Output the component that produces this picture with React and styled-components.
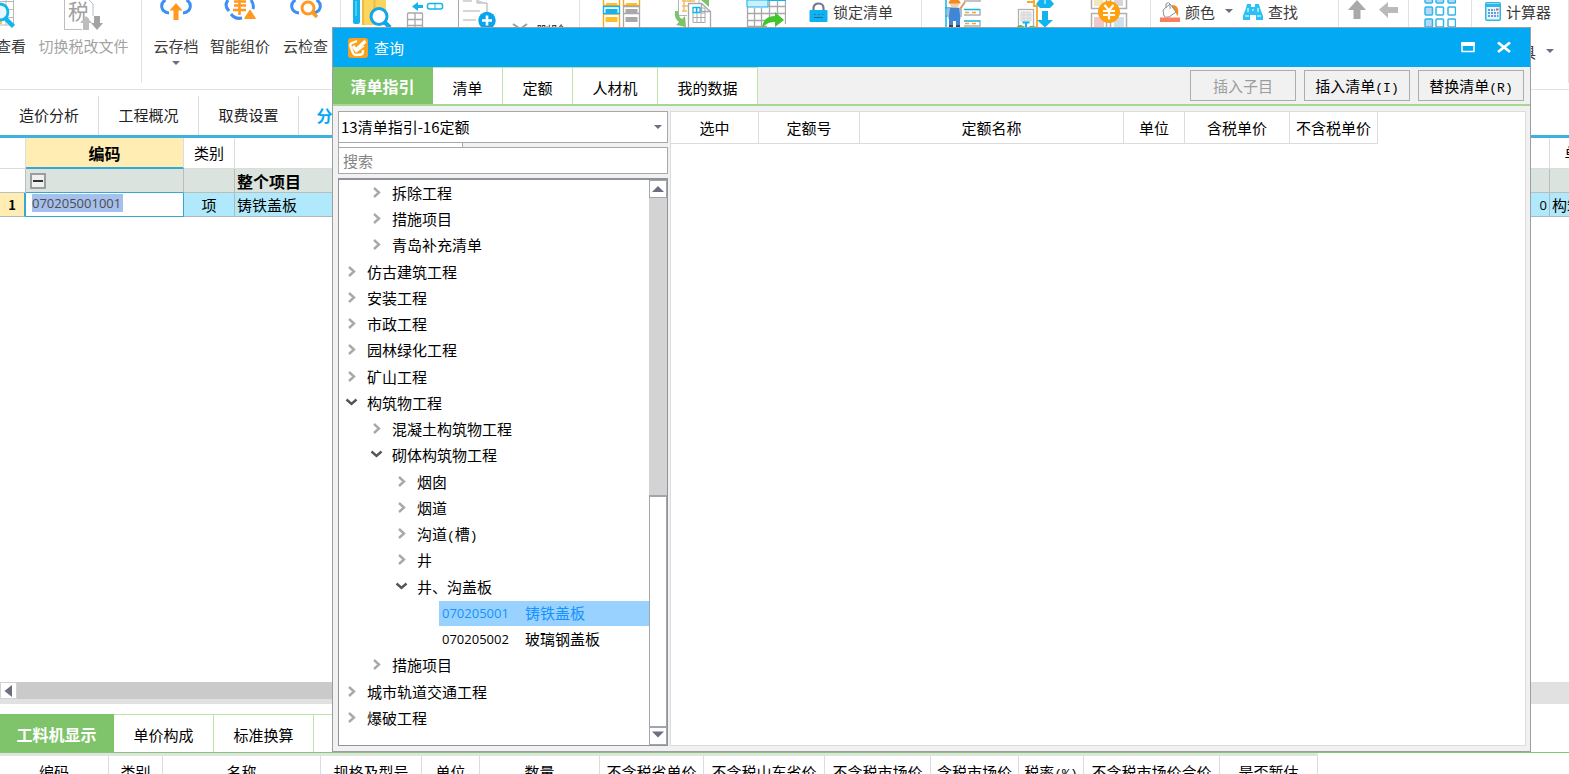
import React from 'react';
import styled, {createGlobalStyle, css} from 'styled-components';

const GlobalStyle = createGlobalStyle`
  * {
    box-sizing: border-box;
  }

  body {
    margin: 0;
    background: #fff;
  }

  body, button, input, select {
    font-family: "Noto Sans CJK SC", "Liberation Sans", sans-serif;
    font-size: 15px;
    line-height: 20px;
    color: #000;
  }

  button {
    padding: 0;
    border: 0;
    background: none;
    white-space: nowrap;
  }
`;

const Page = styled.div`
  position: relative;
  display: flex;
  flex-direction: column;
  height: 100vh;
  overflow: hidden;
`;

const Latin = styled.span`
  font-family: "Liberation Mono", monospace;
  font-size: 13px;
  line-height: 1;
`;

const Code = styled.span`
  font-family: "Open Sans", sans-serif;
  font-size: 13px;
`;

/* ribbon */

const Ribbon = styled.header`
  display: flex;
  flex: none;
  height: 90px;
  border-bottom: 1px solid #e2e2e2;
  overflow: hidden;
`;

const Group = styled.div`
  display: flex;
  flex: none;
  gap: ${props => props.$gap || 0}px;
  width: ${props => props.$width}px;
  height: 83px;
  padding-left: ${props => props.$pad || 0}px;
  border-right: ${props => (props.$open ? '0' : '1px solid #e2e2e2')};
`;

const BigButton = styled.button`
  display: flex;
  flex: none;
  flex-direction: column;
  align-items: center;
  width: ${props => props.$width || 40}px;
  color: ${props => (props.disabled ? '#a3a3a3' : '#3c3c3c')};

  & > svg {
    flex: none;
  }

  & > span {
    margin: 4px 0;
  }
`;

const Stack = styled.div`
  display: flex;
  flex-direction: column;
  padding-top: ${props => props.$top || 2}px;
`;

const StackRow = styled.div`
  display: flex;
  align-items: center;
  gap: 10px;
  height: 20px;
`;

const SmallButton = styled.button`
  display: flex;
  align-items: center;
  gap: 5px;
  height: 20px;
  color: #3c3c3c;
`;

const IndentedButton = styled(SmallButton)`
  margin-left: 21px;
`;

/* module tabs and bill grid */

const NavTabs = styled.nav`
  display: flex;
  flex: none;
  height: 48px;
  padding-top: 6px;
  border-bottom: 3px solid #3fb1de;
`;

const NavTab = styled.button`
  width: 100px;
  padding-bottom: 2px;
  border-right: 1px solid #dcdcdc;
  color: #222;

  &:first-child {
    width: 99px;
  }

  ${props => props.$active && css`
    color: #03a9f4;
    font-size: 16px;
    font-weight: 700;
  `}
`;

const GridArea = styled.div`
  flex: 1;
  min-height: 0;
  overflow: hidden;
`;

const BillTable = styled.table`
  width: calc(100% + 101px);
  table-layout: fixed;
  border-collapse: separate;
  border-spacing: 0;

  th, td {
    padding: 0 2px;
    border-right: 1px solid #dcdcdc;
    border-bottom: 1px solid #dcdcdc;
    font-weight: 400;
    white-space: nowrap;
    overflow: hidden;
  }

  th {
    height: 31px;
  }

  td {
    height: 24px;
    text-align: left;
  }
`;

const ActiveHead = styled.th`
  && {
    background: #ffedb3;
    border-bottom: 2px solid #34a8d4;
    font-size: 16px;
    font-weight: 700;
  }
`;

const TotalRow = styled.tr`
  td {
    background: #dae3de;
    border-color: #b9bdbb;
    font-size: 16px;
    font-weight: 700;
  }

  td:first-child {
    background: #fff;
  }

  td:nth-child(2) {
    border-bottom-color: #34a8d4;
  }
`;

const ItemRow = styled.tr`
  td {
    background: #b0e9fb;
    border-color: #b0b8bb;
  }
`;

const RowNumber = styled.td`
  && {
    background: #ffedb3;
    border-right: 2px solid #34a8d4;
    font-size: 13px;
    font-weight: 700;
    text-align: center;
  }
`;

const EditCell = styled.td`
  && {
    padding: 1px 6px 0;
    background: #fff;
    border-color: #34a8d4;
    vertical-align: top;
  }
`;

const CodeInput = styled.input`
  display: block;
  width: 91px;
  height: 18px;
  padding: 0;
  border: 0;
  background: #a5c0ec;
  color: #4d4d4d;
  font-family: "Open Sans", sans-serif;
  font-size: 13px;
`;

const Collapse = styled.button`
  display: block;
  width: 16px;
  height: 16px;
  margin-left: 2px;
  padding: 5px 1px;
  border: 2px solid #9a9e9c;
  background: #f0f0f0;

  &::before {
    content: "";
    display: block;
    height: 2px;
    background: #333;
  }
`;

const CenterCell = styled.td`
  && {
    text-align: center;
  }
`;

const RightCell = styled.td`
  && {
    text-align: right;
  }
`;

const HScroll = styled.div`
  display: flex;
  flex: none;
  align-items: flex-start;
  height: 22px;
  margin-bottom: 10px;
  background: #e1e1e1;
`;

const HScrollButton = styled.button`
  width: 17px;
  height: 17px;
  border: 1px solid #d2d2d2;
  background: #fff;
  line-height: 0;
`;

const HScrollThumb = styled.div`
  width: 70%;
  height: 17px;
  background: #cacaca;
`;

/* bottom panel */

const BottomPanel = styled.section`
  flex: none;
  height: 60px;
  overflow: hidden;
`;

const GreenTabs = styled.div`
  display: flex;
  flex: none;
  height: 39px;
  border-bottom: ${props => props.$line || 1}px solid ${props => (props.$line ? '#a6d795' : '#7fc870')};
`;

const GreenTab = styled.button`
  width: ${props => props.$width}px;
  border-top: 1px solid #bce5aa;
  border-right: 1px solid #bce5aa;
  background: #fff;
  padding-top: 3px;

  ${props => props.$active && css`
    border-color: #7fc36b;
    background: #7fc36b;
    color: #fff;
    font-size: 16px;
    font-weight: 700;
    padding-top: 0;
  `}
`;

const HeadTable = styled.table`
  width: ${props => props.$width}px;
  table-layout: fixed;
  border-collapse: separate;
  border-spacing: 0;
  border-top: ${props => props.$top || 0}px solid #e2e2e2;

  th {
    height: 32px;
    padding: 0;
    border-right: 1px solid #dcdcdc;
    border-bottom: 1px solid #dcdcdc;
    background: #fff;
    font-weight: 400;
    white-space: nowrap;
  }
`;

/* query dialog */

const Dialog = styled.section`
  position: absolute;
  top: 27px;
  right: 38px;
  bottom: 22px;
  left: 332px;
  display: flex;
  flex-direction: column;
  border: 1px solid #9b9fa3;
  background: #f1f1f1;
`;

const TitleBar = styled.header`
  display: flex;
  flex: none;
  align-items: center;
  height: 39px;
  padding: 0 18px 0 15px;
  background: #03a9f2;
  color: #fff;

  h1 {
    flex: 1;
    margin: 0 0 0 6px;
    font-size: 15px;
    font-weight: 400;
  }
`;

const TitleButton = styled.button`
  width: 16px;
  height: 16px;
  margin-left: 20px;
  line-height: 0;
`;

const Actions = styled.div`
  display: flex;
  align-items: center;
  gap: 8px;
  margin-left: auto;
  padding: 0 6px;
`;

const ActionButton = styled.button`
  width: 106px;
  height: 31px;
  border: 1px solid #adadad;
  background: #f1f1f1;
  color: ${props => (props.disabled ? '#9c9c9c' : '#000')};
`;

const DialogBody = styled.div`
  display: grid;
  flex: 1;
  grid-template-columns: 330px 1fr;
  gap: 2px;
  min-height: 0;
  padding: 5px 4px 5px 5px;
`;

const Side = styled.div`
  display: flex;
  flex-direction: column;
  min-height: 0;
`;

const Combo = styled.label`
  display: grid;
  align-items: center;
  flex: none;
  border: 1px solid #a5a8ac;

  select, svg {
    grid-area: 1 / 1;
  }

  select {
    height: 30px;
    padding: 0 2px;
    border: 0;
    appearance: none;
    background: #fff;
  }

  svg {
    justify-self: end;
    margin: 2px 5px 0 0;
    pointer-events: none;
  }
`;

const Strip = styled.div`
  flex: none;
  width: 125px;
  height: 4px;
  border-right: 1px solid #a5a8ac;
  border-left: 1px solid #a5a8ac;
  background: #fff;
`;

const SearchInput = styled.input`
  flex: none;
  width: 100%;
  height: 27px;
  margin-bottom: 4px;
  padding: 0 4px;
  border: 1px solid #a5a8ac;
  background: #fff;

  &::placeholder {
    color: #858585;
    opacity: 1;
  }
`;

const TreeFrame = styled.div`
  display: flex;
  flex: 1;
  min-height: 0;
  border: 1px solid #8f949c;
  border-top-width: 2px;
  background: #fff;
`;

const TreeList = styled.ul`
  flex: 1;
  margin: 0;
  padding: 0;
  list-style: none;
  overflow: hidden;
`;

const TreeItem = styled.li`
  display: flex;
  align-items: center;
  height: 26px;
  padding-left: ${props => props.$level * 25}px;

  &:nth-child(4n) {
    height: 27px;
  }
`;

const Toggle = styled.button`
  width: 25px;
  height: 20px;
  margin-right: 3px;
  line-height: 0;
`;

const Leaf = styled.div`
  display: flex;
  flex: 1;
  align-items: center;
  height: 25px;
  padding-left: 3px;
  background: ${props => (props.$selected ? '#99d1ff' : 'none')};
  color: ${props => (props.$selected ? '#1492ff' : '#000')};

  ${Code} {
    width: 83px;
  }
`;

const VScroll = styled.div`
  display: flex;
  flex-direction: column;
  width: 18px;
  background: #d3d3d3;
`;

const VScrollButton = styled.button`
  flex: none;
  height: 18px;
  border: 1px solid #a3a5a8;
  background: #fff;
  line-height: 0;
`;

const VScrollThumb = styled.div`
  height: 41%;
  margin-top: auto;
  border: 1px solid #a3a5a8;
  border-top-width: 2px;
  background: #fff;
`;

const Results = styled.div`
  border: 1px solid #dcdcdc;
  background: #fff;
  overflow: hidden;
`;

/* icons */

const Caret = ({dir = 'down', size = 8, color = '#6b6f80'}) => {
  const paths = {down: 'M0 1h8L4 5z', up: 'M0 6h8L4 2z', left: 'M6 0v8L1 4z'};
  return (
    <svg width={size} height={size} viewBox="0 0 8 8">
      <path d={paths[dir]} fill={color} />
    </svg>
  );
};

const Chevron = ({open}) => (
  <svg width="14" height="14" viewBox="0 0 14 14" fill="none" strokeWidth="2.400">
    {open
      ? <path d="M1.500 3.500l5 4.500 5-4.500" stroke="#555" />
      : <path d="M4 2l5 4.500-5 4.500" stroke="#a9a9a9" />}
  </svg>
);

const Big = ({children}) => (
  <svg width="40" height="32" viewBox="0 0 40 32" fill="none">{children}</svg>
);

const ViewIcon = () => (
  <Big>
    <path d="M0 1.500h23M0 9.500h23M0 17.500h23M0 25h23M22.500 0v26M15 0v25" stroke="#b9b9b9" />
    <path d="M8 13h3v11H8z" fill="#f9c74d" />
    <circle cx="9" cy="12" r="8" fill="#e9f8fe" stroke="#12b4ee" strokeWidth="2.800" />
    <path d="M14 18l8.500 8.500" stroke="#12b4ee" strokeWidth="4.500" />
  </Big>
);

const TaxIcon = () => (
  <Big>
    <path d="M.5 0v29.500H18M25 0l4 4v12" stroke="#bdbdbd" />
    <text x="4" y="19" fontSize="21" fill="#a0a0a0">税</text>
    <path d="M22 16l6 7h-3v7h-6v-7h-3z" fill="#bdbdbd" />
    <path d="M33 30l6-7h-3v-7h-6v7h-3z" fill="#a3a3a3" />
  </Big>
);

const CloudArc = () => (
  <path d="M9.500 0C4 3 4 12 13 13M30.500 0C36 3 36 12 27 13" stroke="#3d8ff5" strokeWidth="3" />
);

const CloudSaveIcon = () => (
  <Big>
    <CloudArc />
    <path d="M20 3l6.500 7.500h-4V20h-5v-9.500h-4z" fill="#ff9a1f" />
  </Big>
);

const SmartIcon = () => (
  <Big>
    <path d="M8 0C5 4 6 8 9 11M11 14c3 4 7 5 11 4M31 0c2 3 3 6 2 9" stroke="#3d8ff5" strokeWidth="3" />
    <path d="M14 1.500h12M13 10h13M19.500 0v15M14 5.500h12" stroke="#ff9a1f" strokeWidth="2.600" />
    <path d="M30 10l5.500 8.500h-11z" fill="#ff9a1f" stroke="#ff9a1f" strokeLinejoin="round" />
  </Big>
);

const CloudCheckIcon = () => (
  <Big>
    <CloudArc />
    <circle cx="22" cy="8" r="6" stroke="#ff9a1f" strokeWidth="3" />
    <path d="M26 12l5 5" stroke="#ff9a1f" strokeWidth="3.500" />
  </Big>
);

const BooksIcon = () => (
  <Big>
    <path d="M1 0h7v22q0 2-2 2H3q-2 0-2-2z" fill="#12b4ee" />
    <path d="M4 1v15" stroke="#8fdffa" />
    <path d="M10 0h24v25H12q-2 0-2-2z" fill="#fbd55f" />
    <path d="M11 0v25M22.500 0v10" stroke="#edb93e" strokeWidth="2" />
    <circle cx="27" cy="16.500" r="8" fill="#fff" stroke="#12a6ea" strokeWidth="3" />
    <path d="M32.500 22L38 27.500" stroke="#12a6ea" strokeWidth="4.500" />
  </Big>
);

const RowInsertIcon = () => (
  <Big>
    <path d="M7 6.500l6-4.500v3h5v3h-5v3z" fill="#12b4ee" />
    <rect x="22.500" y="3.500" width="15" height="5.500" rx="2" stroke="#12b4ee" strokeWidth="1.500" />
    <path d="M30 4v5" stroke="#12b4ee" />
    <path d="M2.500 32V14q0-1 1-1h13q1 0 1 1v18M3 19.500h14M3 25.500h14M10 13v18" stroke="#a8a8a8" strokeWidth="1.300" />
  </Big>
);

const DocAddIcon = () => (
  <Big>
    <path d="M.5 0v32M19 0v3h10v10" stroke="#a9a9a9" />
    <path d="M20 0l8 3h-8z" fill="#cfcfcf" />
    <path d="M5 1h9M5 11h17M5 20h13" stroke="#d6d6d6" strokeWidth="2" />
    <circle cx="29" cy="20.500" r="8.700" fill="#08a5ee" />
    <path d="M29 15.500v10M24 20.500h10" stroke="#fff" strokeWidth="2.600" />
  </Big>
);

const CompareIcon = () => (
  <Big>
    <path d="M1.500 0v5.500h16V0M21.500 0v5.500h16V0M1.500 14h16v20h-16z" stroke="#f7a823" strokeWidth="1.400" />
    <path d="M4 4h11M24 4h11" stroke="#fbc02d" strokeWidth="2" />
    <rect x="1.500" y="6.500" width="16" height="7" stroke="#12b4ee" strokeWidth="1.400" />
    <path d="M21.500 6.500h16v28h-16zM21.500 13.500h16" stroke="#a8a8a8" strokeWidth="1.300" />
    <path d="M3.500 9h12v4h-12z" fill="#12b4ee" />
    <path d="M3.500 17h12v5h-12z" fill="#fbc02d" />
    <path d="M23.500 9h12v4h-12zM23.500 17h12v5h-12z" fill="#a8a8a8" />
  </Big>
);

const ConvertIcon = () => (
  <Big>
    <path d="M4.500 0v15.500H13M25 0v3" stroke="#b5b5b5" />
    <path d="M8 1h13M8 6h6M8 11h5M10 0v11M16 0v2" stroke="#f4bd66" strokeWidth="1.500" />
    <path d="M14.500 32V3.500h13l9 8V32M27.500 3.500v8h9" stroke="#a8a8a8" strokeWidth="1.300" />
    <path d="M19 13v9.500h12V8h-4M19 17.500h12M23 8v14M27 8v14M27 13h4" stroke="#a8a8a8" />
    <path d="M19 7.500h7v5h-7zM22.500 7v6" stroke="#12b4ee" strokeWidth="1.300" />
    <path d="M1 11c-1 7 2 9 4 11l-3 3 10 2-1-11-3 3c-2-1-4-4-4-8zM27 0l8 7V0z" fill="#7cc36b" />
  </Big>
);

const ExportIcon = () => (
  <Big>
    <path d="M1.500 0v32M8.500 8v20M15.500 8v20M23.500 0v20M31.500 0v14M39.500 0v24M1 13.500h39M1 20.500h26M1 26.500h20M22 6.500h18" stroke="#a8a8a8" strokeWidth="1.300" />
    <path d="M1 0h21v7H1z" fill="#c8f0fd" stroke="#12b4ee" />
    <path d="M22 .5h18" stroke="#12b4ee" />
    <path d="M16 28c1-8 5-12 13-12v-4l9 8-9 7v-5c-6 0-9 2-13 6z" fill="#43c52f" />
  </Big>
);

const WorkerIcon = () => (
  <Big>
    <path d="M2 0v32M1 8h8M1 16h8" stroke="#12b4ee" strokeWidth="1.500" />
    <path d="M20 1h16V0M20 15h16v-6M20 26h16v-6" stroke="#b0b0b0" strokeWidth="1.500" />
    <path d="M20 9.500h16M20 21h16" stroke="#12b4ee" strokeWidth="1.500" />
    <path d="M21 12.500h4M28 12.500h4M21 23.500h4M28 23.500h4" stroke="#f7a823" strokeWidth="1.500" />
    <circle cx="10.500" cy="3.500" r="4.500" fill="#f6cda6" />
    <path d="M4.500 3.500c0-6 12-6 12 0z" fill="#f58a1f" />
    <path d="M3 9q8-4 15 0v8H3z" fill="#aebfd0" />
    <path d="M6 8h9l1.500 11h-12z" fill="#3f87d6" />
    <path d="M5 17h11v8h-4v-4H9v4H5z" fill="#3f87d6" />
    <path d="M5 25h4v3H5zM12 25h4v3h-4z" fill="#3b4654" />
    <path d="M16 9l5-7" stroke="#d99a63" strokeWidth="2" />
  </Big>
);

const TransferIcon = () => (
  <Big>
    <path d="M11 2h7V0M18 1v5h3v26" stroke="#f7a823" strokeWidth="1.800" />
    <rect x="2.500" y="9.500" width="15" height="18" stroke="#b0b0b0" strokeWidth="1.300" />
    <path d="M5 12h10v9H5zM8 12v9M12 12v9M5 15h10M5 18h10" fill="#ececec" stroke="#d4d4d4" />
    <path d="M0 28q3-5 7-2 2 1 3 2zM12 28q2-3 5-2 3 0 4 2z" fill="#65b84f" />
    <path d="M10 23v5M6.500 22.500h7" stroke="#12b4ee" strokeWidth="2" />
    <path d="M20 4l4-5h10l4 5-4 4h-10zM26 11h6v9h5l-8 7.500L21 20h5z" fill="#12b4ee" />
    <path d="M29 0v4" stroke="#fff" />
  </Big>
);

const PriceIcon = () => (
  <Big>
    <path d="M3.500 0v8.500h15V0M22.500 0v8.500h16V0M3.500 32V13.500h35V32M18.500 14v18M22.500 14v18" stroke="#b0b0b0" strokeWidth="1.500" />
    <path d="M6 0h9v6H6z" fill="#f2e7bd" />
    <path d="M26 0h9v6h-9z" fill="#d9d4de" />
    <path d="M6 17h10v10H6z" fill="#efc8cb" />
    <path d="M26 17h10v10H26z" fill="#cde0ec" />
    <circle cx="21" cy="12" r="11" fill="#ffa10c" />
    <path d="M16.500 5l4.500 5.500L25.500 5M15 11h12M15 15h12M21 11v8.500" stroke="#fff" strokeWidth="2.200" />
  </Big>
);

const CutIcon = () => (
  <svg width="20" height="16" viewBox="0 0 20 16" fill="none" stroke="#9b9b9b" strokeWidth="2">
    <path d="M2 1l12 8M16 1L5 9" />
    <circle cx="4" cy="12" r="2" />
    <circle cx="14" cy="12" r="2" />
  </svg>
);

const LockIcon = () => (
  <svg width="19" height="20" viewBox="0 0 19 20" fill="none">
    <path d="M4.500 10V6c0-6 10-6 10 0v4" stroke="#73798a" strokeWidth="2.200" />
    <rect x="0.500" y="8" width="18" height="12" rx="1" fill="#0db2f2" />
    <path d="M5 12.500h1.500M9 12.500h1.500M13 12.500h1.500M5 15.500h9" stroke="#166f9a" />
  </svg>
);

const BucketIcon = () => (
  <svg width="20" height="20" viewBox="0 0 20 20" fill="none">
    <path d="M12 3c6 0 7 4 6 11-3-2-1-6-6-7z" fill="#f58a1f" />
    <path d="M3 8l7-6 6 8-7 5q-4 1-5-1z" fill="#fff" stroke="#8d8d8d" />
    <path d="M6 6V2q3-3 4 0v5" stroke="#8d8d8d" />
    <path d="M0 15.500h20V20H0z" fill="#fb7f5c" />
  </svg>
);

const FindIcon = () => (
  <svg width="20" height="18" viewBox="0 0 20 18">
    <path d="M4 1h4v3h4V1h4l1 4 3 8v4h-7v-5H7v5H0v-4l3-8z" fill="#2cc0f4" />
    <path d="M2 13h4M14 13h4M5 5v4M15 5v4M9 7h2" stroke="#b8edff" strokeWidth="1.500" />
  </svg>
);

const UpIcon = () => (
  <svg width="18" height="20" viewBox="0 0 18 20">
    <path d="M9 0l9 10h-5.500v9h-7v-9H0z" fill="#a9a9a9" />
  </svg>
);

const LeftIcon = () => (
  <svg width="19" height="20" viewBox="0 0 19 20">
    <path d="M0 9.500L9 2v5h10v6H9v5z" fill="#bababa" />
  </svg>
);

const TilesIcon = () => (
  <svg width="32" height="28" viewBox="0 0 32 28" strokeWidth="1.500" stroke="#2fb6ea">
    {[-5, 7, 19].map(y => [1, 12, 24].map(x => (
      <rect key={`${x}-${y}`} x={x} y={y} width="7.500" height="8" rx="1"
        fill={x === 1 || y < 0 ? '#b3d9f7' : '#fff'} />
    )))}
  </svg>
);

const CalculatorIcon = () => (
  <svg width="16" height="20" viewBox="0 0 16 20" fill="none">
    <rect x="0.750" y="0.750" width="14.500" height="17.500" rx="1" fill="#e6f6fd" stroke="#2fb6ea" strokeWidth="1.500" />
    <path d="M1 3.500h14" stroke="#2fb6ea" strokeWidth="3" />
    <path d="M3 8h2M6 8h2M9 8h1M3 11h2M6 11h2M9 11h2M3 14h2M6 14h2M9 14h2M12 11h1.500M12 14h1.500" stroke="#3f7ccf" strokeWidth="1.500" />
    <path d="M11 7.500h2.500" stroke="#f05a3c" strokeWidth="2" />
  </svg>
);

const LogoIcon = () => (
  <svg width="20" height="20" viewBox="0 0 20 20" fill="none">
    <rect width="20" height="20" rx="3" fill="#f9a11b" />
    <path d="M9 3L3 5.500q-1 1-.5 3L5 15q1 2 3 2l5-.5q2-.5 2-3V12" stroke="#fff" strokeWidth="2.400" />
    <path d="M5 8l3 4 9.500-9" stroke="#fff" strokeWidth="3.200" />
    <path d="M8 14l8-6" stroke="#fff" strokeWidth="1.500" />
  </svg>
);

const tree = [
  {level: 1, text: '拆除工程'},
  {level: 1, text: '措施项目'},
  {level: 1, text: '青岛补充清单'},
  {level: 0, text: '仿古建筑工程'},
  {level: 0, text: '安装工程'},
  {level: 0, text: '市政工程'},
  {level: 0, text: '园林绿化工程'},
  {level: 0, text: '矿山工程'},
  {level: 0, text: '构筑物工程', open: true},
  {level: 1, text: '混凝土构筑物工程'},
  {level: 1, text: '砌体构筑物工程', open: true},
  {level: 2, text: '烟囱'},
  {level: 2, text: '烟道'},
  {level: 2, text: <>沟道<Latin>(</Latin>槽<Latin>)</Latin></>},
  {level: 2, text: '井'},
  {level: 2, text: '井、沟盖板', open: true},
  {level: 4, code: '070205001', text: '铸铁盖板', selected: true},
  {level: 4, code: '070205002', text: '玻璃钢盖板'},
  {level: 1, text: '措施项目'},
  {level: 0, text: '城市轨道交通工程'},
  {level: 0, text: '爆破工程'},
];

const resultColumns = [
  ['选中', 88], ['定额号', 101], ['定额名称', 264],
  ['单位', 61], ['含税单价', 105], ['不含税单价', 88],
];

const detailColumns = [
  ['编码', 109], ['类别', 54], ['名称', 158], ['规格及型号', 101], ['单位', 58],
  ['数量', 120], ['不含税省单价', 104], ['不含税山东省价', 121], ['不含税市场价', 106],
  ['含税市场价', 88], [<>税率<Latin>(%)</Latin></>, 65], ['不含税市场价合价', 136], ['是否暂估', 98],
];

function ColumnHeads({columns, top}) {
  const total = columns.reduce((sum, column) => sum + column[1], 0);
  return (
    <HeadTable $width={total} $top={top}>
      <colgroup>
        {columns.map((column, index) => <col key={index} width={column[1]} />)}
      </colgroup>
      <thead>
        <tr>{columns.map((column, index) => <th key={index}>{column[0]}</th>)}</tr>
      </thead>
    </HeadTable>
  );
}

function MainRibbon() {
  return (
    <Ribbon>
      <Group $width={142} $gap={14}>
        <BigButton $width={22}><ViewIcon /><span>查看</span></BigButton>
        <BigButton $width={95} disabled><TaxIcon /><span>切换税改文件</span></BigButton>
      </Group>
      <Group $width={199} $pad={8}>
        <BigButton $width={52}><CloudSaveIcon /><span>云存档</span><Caret /></BigButton>
        <BigButton $width={76}><SmartIcon /><span>智能组价</span></BigButton>
        <BigButton $width={55}><CloudCheckIcon /><span>云检查</span></BigButton>
      </Group>
      <Group $width={239} $pad={11} $gap={13}>
        <BigButton aria-label="查询"><BooksIcon /></BigButton>
        <BigButton aria-label="插入"><RowInsertIcon /></BigButton>
        <BigButton aria-label="补充"><DocAddIcon /></BigButton>
        <Stack $top={21}>
          <SmallButton disabled><CutIcon />删除</SmallButton>
        </Stack>
      </Group>
      <Group $width={227} $pad={22} $gap={32} $open>
        <BigButton aria-label="标准组价"><CompareIcon /></BigButton>
        <BigButton aria-label="复用组价"><ConvertIcon /></BigButton>
        <BigButton aria-label="替换数据"><ExportIcon /></BigButton>
      </Group>
      <Group $width={115} $pad={2}>
        <Stack>
          <SmallButton><LockIcon />锁定清单</SmallButton>
        </Stack>
      </Group>
      <Group $width={229} $pad={22} $gap={32}>
        <BigButton aria-label="整理清单"><WorkerIcon /></BigButton>
        <BigButton aria-label="其他"><TransferIcon /></BigButton>
        <BigButton aria-label="单价构成"><PriceIcon /></BigButton>
      </Group>
      <Group $width={188} $pad={9}>
        <Stack>
          <StackRow>
            <SmallButton><BucketIcon />颜色</SmallButton>
            <SmallButton aria-label="更多颜色"><Caret /></SmallButton>
            <SmallButton><FindIcon />查找</SmallButton>
          </StackRow>
        </Stack>
      </Group>
      <Group $width={70} $pad={9} $gap={13}>
        <SmallButton aria-label="上移"><UpIcon /></SmallButton>
        <SmallButton aria-label="左移"><LeftIcon /></SmallButton>
      </Group>
      <Group $width={63} $pad={15}>
        <BigButton $width={32} aria-label="智能"><TilesIcon /></BigButton>
      </Group>
      <Group $width={97} $pad={13}>
        <Stack>
          <SmallButton><CalculatorIcon />计算器</SmallButton>
          <StackRow />
          <StackRow>
            <IndentedButton>工具</IndentedButton>
            <Caret />
          </StackRow>
        </Stack>
      </Group>
    </Ribbon>
  );
}

function BillGrid() {
  return (
    <GridArea>
      <BillTable>
        <colgroup>
          <col width="26" />
          <col width="158" />
          <col width="51" />
          <col />
          <col width="66" />
          <col width="120" />
        </colgroup>
        <thead>
          <tr>
            <th />
            <ActiveHead>编码</ActiveHead>
            <th>类别</th>
            <th />
            <th>输出</th>
            <th>单价构成文件</th>
          </tr>
        </thead>
        <tbody>
          <TotalRow>
            <td />
            <td><Collapse aria-label="折叠" /></td>
            <td />
            <td>整个项目</td>
            <td />
            <td />
          </TotalRow>
          <ItemRow>
            <RowNumber>1</RowNumber>
            <EditCell><CodeInput aria-label="编码" defaultValue="070205001001" /></EditCell>
            <CenterCell>项</CenterCell>
            <td>铸铁盖板</td>
            <RightCell><Code>0</Code></RightCell>
            <td>构筑物工程</td>
          </ItemRow>
        </tbody>
      </BillTable>
    </GridArea>
  );
}

function TreeNode({node}) {
  if (node.code) {
    return (
      <TreeItem $level={node.level}>
        <Leaf $selected={node.selected}>
          <Code>{node.code}</Code>
          {node.text}
        </Leaf>
      </TreeItem>
    );
  }
  return (
    <TreeItem $level={node.level}>
      <Toggle aria-label={node.open ? '折叠' : '展开'}><Chevron open={node.open} /></Toggle>
      <span>{node.text}</span>
    </TreeItem>
  );
}

function QueryDialog() {
  return (
    <Dialog role="dialog" aria-label="查询">
      <TitleBar>
        <LogoIcon />
        <h1>查询</h1>
        <TitleButton aria-label="最大化">
          <svg width="16" height="16" viewBox="0 0 16 16" fill="none" stroke="#fff">
            <path d="M2 3v8.500h12V3" strokeWidth="1.500" />
            <path d="M1.250 4h13.500" strokeWidth="4" />
          </svg>
        </TitleButton>
        <TitleButton aria-label="关闭">
          <svg width="16" height="16" viewBox="0 0 16 16" stroke="#fff" strokeWidth="2.800">
            <path d="M2 2.500l12 9.500M14 2.500L2 12" />
          </svg>
        </TitleButton>
      </TitleBar>
      <GreenTabs $line={2}>
        <GreenTab $width={100} $active>清单指引</GreenTab>
        <GreenTab $width={70}>清单</GreenTab>
        <GreenTab $width={70}>定额</GreenTab>
        <GreenTab $width={85}>人材机</GreenTab>
        <GreenTab $width={100}>我的数据</GreenTab>
        <Actions>
          <ActionButton disabled>插入子目</ActionButton>
          <ActionButton>插入清单<Latin>(I)</Latin></ActionButton>
          <ActionButton>替换清单<Latin>(R)</Latin></ActionButton>
        </Actions>
      </GreenTabs>
      <DialogBody>
        <Side>
          <Combo>
            <select aria-label="清单库">
              <option>13清单指引-16定额</option>
            </select>
            <Caret />
          </Combo>
          <Strip />
          <SearchInput type="text" aria-label="搜索" placeholder="搜索" />
          <TreeFrame>
            <TreeList>
              {tree.map((node, index) => <TreeNode key={index} node={node} />)}
            </TreeList>
            <VScroll>
              <VScrollButton aria-label="向上"><Caret dir="up" size={12} /></VScrollButton>
              <VScrollThumb />
              <VScrollButton aria-label="向下"><Caret size={12} /></VScrollButton>
            </VScroll>
          </TreeFrame>
        </Side>
        <Results>
          <ColumnHeads columns={resultColumns} />
        </Results>
      </DialogBody>
    </Dialog>
  );
}

export default function App() {
  return (
    <Page>
      <GlobalStyle />
      <MainRibbon />
      <NavTabs>
        <NavTab>造价分析</NavTab>
        <NavTab>工程概况</NavTab>
        <NavTab>取费设置</NavTab>
        <NavTab $active>分部分项</NavTab>
      </NavTabs>
      <BillGrid />
      <HScroll>
        <HScrollButton aria-label="向左"><Caret dir="left" size={12} /></HScrollButton>
        <HScrollThumb />
      </HScroll>
      <BottomPanel>
        <GreenTabs>
          <GreenTab $width={114} $active>工料机显示</GreenTab>
          <GreenTab $width={100}>单价构成</GreenTab>
          <GreenTab $width={100}>标准换算</GreenTab>
          <GreenTab $width={100}>换算信息</GreenTab>
        </GreenTabs>
        <ColumnHeads columns={detailColumns} top={3} />
      </BottomPanel>
      <QueryDialog />
    </Page>
  );
}
